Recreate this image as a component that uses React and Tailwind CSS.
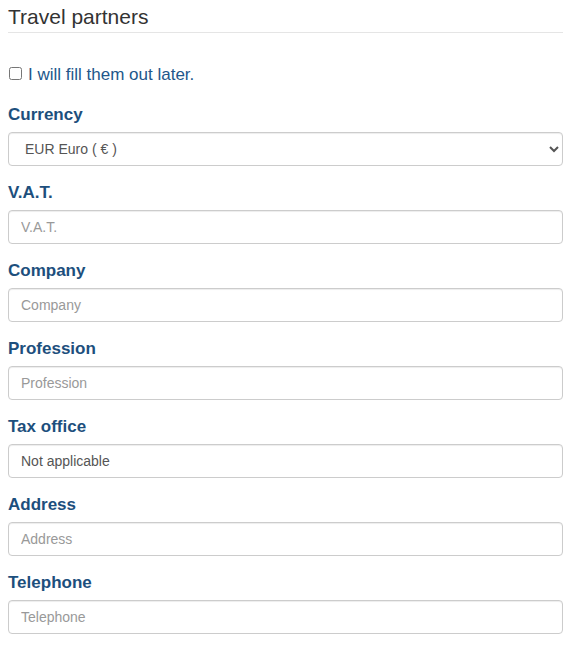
import React from "react";

const fields = [
  { label: "V.A.T.", placeholder: "V.A.T." },
  { label: "Company", placeholder: "Company" },
  { label: "Profession", placeholder: "Profession" },
  { label: "Tax office", value: "Not applicable" },
  { label: "Address", placeholder: "Address" },
  { label: "Telephone", placeholder: "Telephone" },
];

export default function App() {
  return (
    <div className="bg-white w-[580px] h-[647px] px-[8px] pr-[17px] font-['Liberation_Sans',Arial,sans-serif] text-[#333]">
      <div className="h-[33px] border-b border-[#e5e5e5] pt-[5px]">
        <h2 className="text-[21px] leading-[24px]">Travel partners</h2>
      </div>
      <label className="flex items-center h-[24px] mt-[30px] mb-[15px] text-[17px] text-[#22578b]">
        <input type="checkbox" className="w-[13px] h-[13px] ml-[1px] mr-[6px] mt-[-3px]" />
        I will fill them out later.
      </label>
      <div className="mb-[14px]">
        <label className="block h-[25px] mb-[5px] text-[17px] leading-[25px] font-bold text-[#1d4f7d]">Currency</label>
        <select defaultValue="EUR" className="block w-full h-[34px] px-[12px] border border-[#ccc] rounded-[4px] bg-white text-[14px] text-[#555] shadow-[inset_0_1px_1px_rgba(0,0,0,0.075)]">
          <option value="EUR">EUR Euro ( € )</option>
        </select>
      </div>
      {fields.map((f) => (
        <div key={f.label} className="mb-[14px]">
          <label className="block h-[25px] mb-[5px] text-[17px] leading-[25px] font-bold text-[#1d4f7d]">{f.label}</label>
          <input
            type="text"
            placeholder={f.placeholder}
            defaultValue={f.value}
            className="block w-full h-[34px] px-[12px] border border-[#ccc] rounded-[4px] bg-white text-[14px] text-[#555] placeholder:text-[#999] shadow-[inset_0_1px_1px_rgba(0,0,0,0.075)] outline-none"
          />
        </div>
      ))}
    </div>
  );
}
